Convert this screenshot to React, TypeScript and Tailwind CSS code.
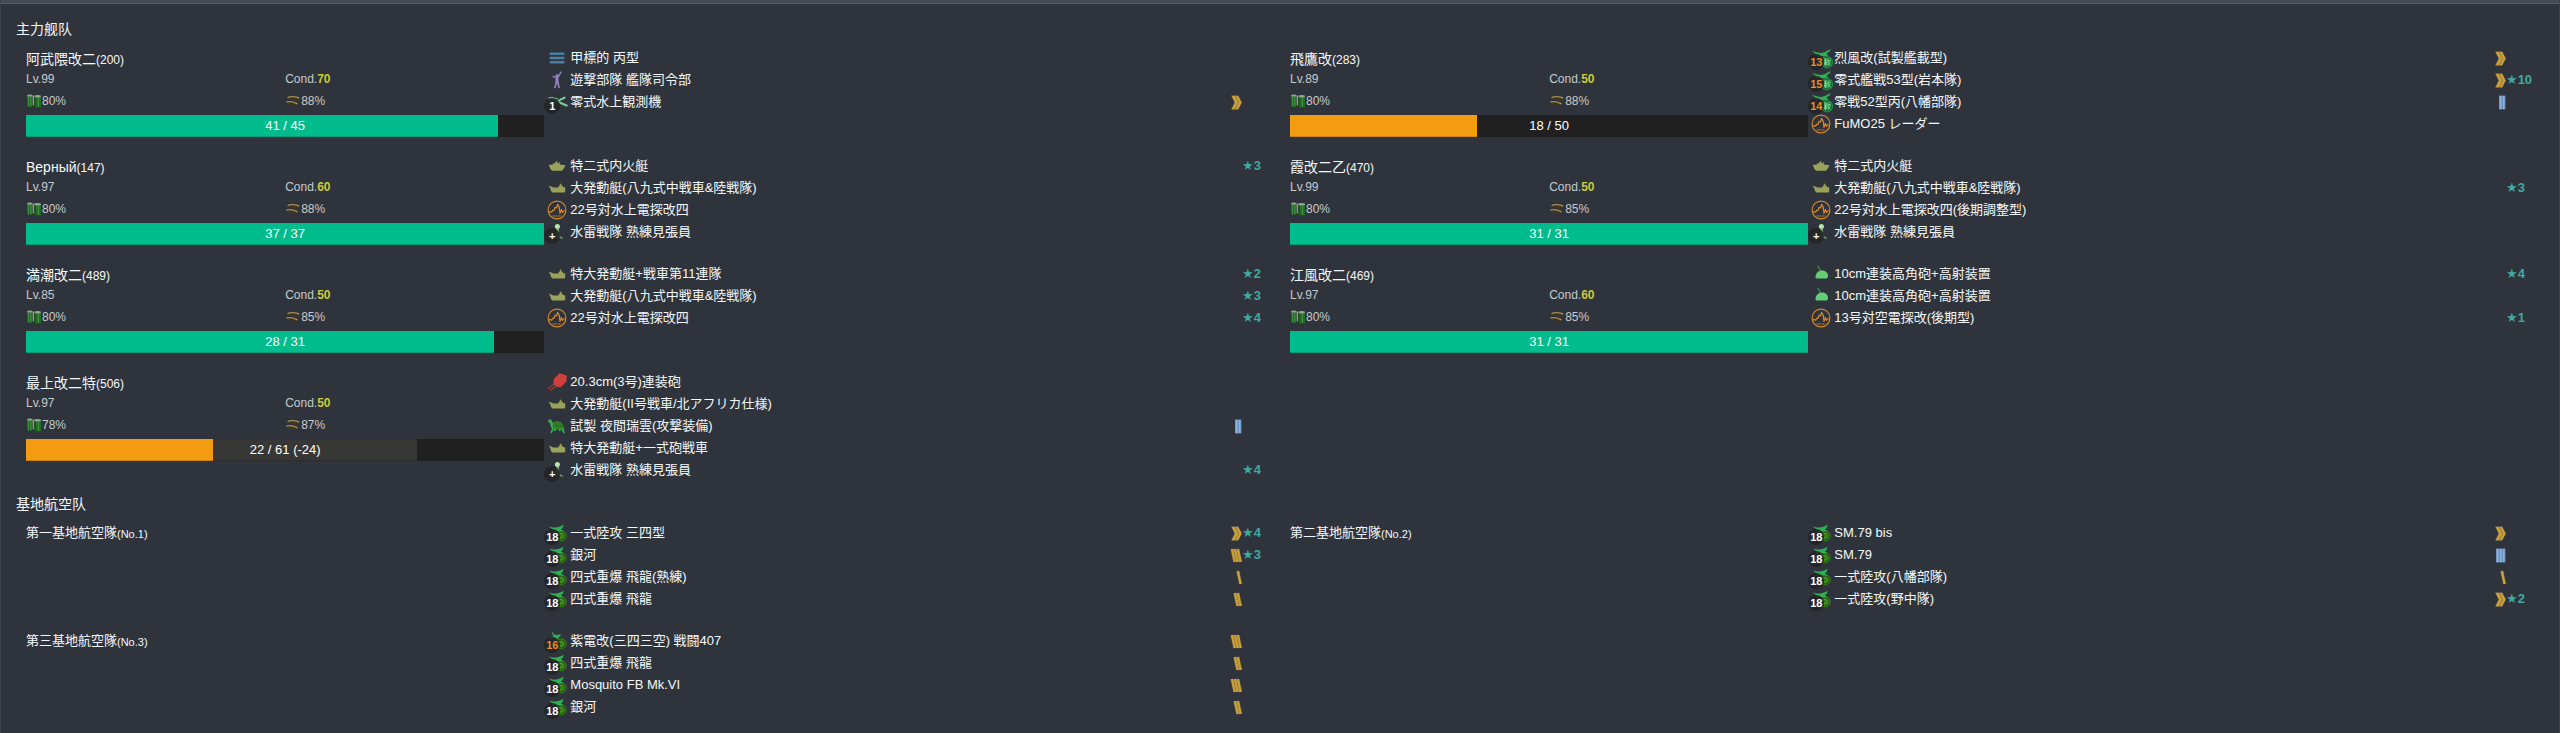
import React from 'react'

type IconKind =
  | 'sub' | 'command' | 'recon' | 'tank' | 'boat' | 'radar' | 'lookout'
  | 'gun' | 'turtle' | 'aagun' | 'fighter' | 'bomber' | 'interceptor'
type Rank = 'chevron' | 'gold1' | 'gold2' | 'gold3' | 'blue2' | 'blue3'

interface Item {
  icon: IconKind
  name: string
  count?: string
  rank?: Rank
  star?: number
}
interface Ship {
  name: string
  id: number
  lv: number
  cond: number
  fuel: number
  ammo: number
  hp: number
  max: number
  loss?: number
  items: Item[]
}
interface Base {
  name: string
  no: number
  items: Item[]
}

const ships: Ship[] = [
  {
    name: '阿武隈改二', id: 200, lv: 99, cond: 70, fuel: 80, ammo: 88, hp: 41, max: 45,
    items: [
      { icon: 'sub', name: '甲標的 丙型' },
      { icon: 'command', name: '遊撃部隊 艦隊司令部' },
      { icon: 'recon', name: '零式水上観測機', count: '1', rank: 'chevron' },
    ],
  },
  {
    name: '飛鷹改', id: 283, lv: 89, cond: 50, fuel: 80, ammo: 88, hp: 18, max: 50,
    items: [
      { icon: 'fighter', name: '烈風改(試製艦載型)', count: '13', rank: 'chevron' },
      { icon: 'fighter', name: '零式艦戦53型(岩本隊)', count: '15', rank: 'chevron', star: 10 },
      { icon: 'fighter', name: '零戦52型丙(八幡部隊)', count: '14', rank: 'blue2' },
      { icon: 'radar', name: 'FuMO25 レーダー' },
    ],
  },
  {
    name: 'Верный', id: 147, lv: 97, cond: 60, fuel: 80, ammo: 88, hp: 37, max: 37,
    items: [
      { icon: 'tank', name: '特二式内火艇', star: 3 },
      { icon: 'boat', name: '大発動艇(八九式中戦車&陸戦隊)' },
      { icon: 'radar', name: '22号対水上電探改四' },
      { icon: 'lookout', name: '水雷戦隊 熟練見張員', count: '+' },
    ],
  },
  {
    name: '霞改二乙', id: 470, lv: 99, cond: 50, fuel: 80, ammo: 85, hp: 31, max: 31,
    items: [
      { icon: 'tank', name: '特二式内火艇' },
      { icon: 'boat', name: '大発動艇(八九式中戦車&陸戦隊)', star: 3 },
      { icon: 'radar', name: '22号対水上電探改四(後期調整型)' },
      { icon: 'lookout', name: '水雷戦隊 熟練見張員', count: '+' },
    ],
  },
  {
    name: '満潮改二', id: 489, lv: 85, cond: 50, fuel: 80, ammo: 85, hp: 28, max: 31,
    items: [
      { icon: 'boat', name: '特大発動艇+戦車第11連隊', star: 2 },
      { icon: 'boat', name: '大発動艇(八九式中戦車&陸戦隊)', star: 3 },
      { icon: 'radar', name: '22号対水上電探改四', star: 4 },
    ],
  },
  {
    name: '江風改二', id: 469, lv: 97, cond: 60, fuel: 80, ammo: 85, hp: 31, max: 31,
    items: [
      { icon: 'aagun', name: '10cm連装高角砲+高射装置', star: 4 },
      { icon: 'aagun', name: '10cm連装高角砲+高射装置' },
      { icon: 'radar', name: '13号対空電探改(後期型)', star: 1 },
    ],
  },
  {
    name: '最上改二特', id: 506, lv: 97, cond: 50, fuel: 78, ammo: 87, hp: 22, max: 61, loss: 24,
    items: [
      { icon: 'gun', name: '20.3cm(3号)連装砲' },
      { icon: 'boat', name: '大発動艇(II号戦車/北アフリカ仕様)' },
      { icon: 'turtle', name: '試製 夜間瑞雲(攻撃装備)', rank: 'blue2' },
      { icon: 'boat', name: '特大発動艇+一式砲戦車' },
      { icon: 'lookout', name: '水雷戦隊 熟練見張員', count: '+', star: 4 },
    ],
  },
]

const bases: Base[] = [
  {
    name: '第一基地航空隊', no: 1,
    items: [
      { icon: 'bomber', name: '一式陸攻 三四型', count: '18', rank: 'chevron', star: 4 },
      { icon: 'bomber', name: '銀河', count: '18', rank: 'gold3', star: 3 },
      { icon: 'bomber', name: '四式重爆 飛龍(熟練)', count: '18', rank: 'gold1' },
      { icon: 'bomber', name: '四式重爆 飛龍', count: '18', rank: 'gold2' },
    ],
  },
  {
    name: '第二基地航空隊', no: 2,
    items: [
      { icon: 'bomber', name: 'SM.79 bis', count: '18', rank: 'chevron' },
      { icon: 'bomber', name: 'SM.79', count: '18', rank: 'blue3' },
      { icon: 'bomber', name: '一式陸攻(八幡部隊)', count: '18', rank: 'gold1' },
      { icon: 'bomber', name: '一式陸攻(野中隊)', count: '18', rank: 'chevron', star: 2 },
    ],
  },
  {
    name: '第三基地航空隊', no: 3,
    items: [
      { icon: 'interceptor', name: '紫電改(三四三空) 戦闘407', count: '16', rank: 'gold3' },
      { icon: 'bomber', name: '四式重爆 飛龍', count: '18', rank: 'gold2' },
      { icon: 'bomber', name: 'Mosquito FB Mk.VI', count: '18', rank: 'gold3' },
      { icon: 'bomber', name: '銀河', count: '18', rank: 'gold2' },
    ],
  },
]

const Roundel = () => (
  <>
    <circle cx="14.2" cy="12.8" r="5.6" fill="#2b5a17" />
    <circle cx="14.2" cy="12.8" r="4.9" fill="none" stroke="#2f7d15" strokeWidth="1" />
    <circle cx="14" cy="12.8" r="2.5" fill="#2f7d15" stroke="#4fa62a" strokeWidth="1" />
  </>
)

const shapes: Record<IconKind, React.ReactNode> = {
  sub: (
    <g fill="#4b7fa6">
      <rect x="2.5" y="4.4" width="15" height="2.6" rx="1" />
      <rect x="2.5" y="8.7" width="15" height="2.6" rx="1" />
      <rect x="2.5" y="13" width="15" height="2.6" rx="1" />
    </g>
  ),
  command: (
    <g stroke="#9c80c8" strokeLinecap="round" strokeLinejoin="round" fill="none">
      <circle cx="10" cy="5.6" r="1" fill="#9c80c8" />
      <path d="M14 2l-2 3.6-2 2.4L6 6.4" strokeWidth="1.4" />
      <path d="M10 8v4" strokeWidth="3" />
      <path d="M9.4 12 8 17.4M10.8 12l1.2 5.4" strokeWidth="1.6" />
    </g>
  ),
  recon: (
    <g stroke="#7ecb9a" strokeLinecap="round" fill="none">
      <path d="M2 6 10 6.6" strokeWidth="1.4" />
      <path d="M8 8.4 19.6 13.6" strokeWidth="2.2" />
      <path d="M7.6 10.6 17.6 5.6" strokeWidth="2" />
      <path d="M.6 10.4 5 8.6" strokeWidth="1.4" />
      <path d="M5 5.6 9 9" strokeWidth="1.4" />
    </g>
  ),
  tank: (
    <path d="M1.6 9 6 8.6 6.6 6.4 8 8 8.6 5.4 10.4 5.6 10.8 7.8 12.4 5.8 13 8.6 18.4 9.2 17.4 11.4 16.2 13.6 14.8 14.8H5.2L3.4 13 2.6 10.8z" fill="#9aa35b" />
  ),
  boat: (
    <path d="M1.6 7.6 6.6 9.4H11.6V7.8H12.8V5.8H14.4V7.8H15.8V9.2H18.2V13.4L17.4 14.4H5.4L4 13 3.4 10.6z" fill="#9aa35b" />
  ),
  radar: (
    <g fill="none" stroke="#d98b2b" strokeLinejoin="round" strokeLinecap="round">
      <circle cx="10" cy="10" r="8.9" strokeWidth="1.1" />
      <path d="M2.4 11.6 4.6 12.2 5.6 10.4 7 10.4 8 7.4 9.4 8 10.6 4.4 12.2 7.4 13 13.4 14.4 9.4 15.4 12.4 17.2 10.6" strokeWidth="1.2" />
      <path d="M6 16h8" strokeWidth=".8" strokeDasharray="1.4 1.2" />
    </g>
  ),
  lookout: (
    <g>
      <path d="M6.5 14 9 10l2.5-.6L13 13l-1 3.5H8z" fill="#5b8455" />
      <circle cx="10.4" cy="4.4" r="2.5" fill="#b5e6a3" />
      <path d="M9.4 6.6h2.4l.4 4.2-2.6.8z" fill="#8bc983" />
      <path d="M12 14.5l3 1.6" stroke="#6d9c66" strokeWidth="1.6" strokeLinecap="round" />
    </g>
  ),
  gun: (
    <g>
      <path d="M7.2 6.4 12.6 1.2 19.8 3.4 19.4 9.4 13.6 15.2 8.8 14.6 6.2 11z" fill="#cf3f3b" />
      <path d="M8 11.4 .8 17M9.8 13.6 3 18.4" stroke="#cf3f3b" strokeWidth="1" />
    </g>
  ),
  turtle: (
    <g>
      <path d="M5 9.6C6 6 9 4.6 11.6 5.2c2.8.6 5 3 5.2 6.4L18 13l-1 .6H6z" fill="#33802a" />
      <path d="M5.6 9.4c-.4-2.6-.8-5.2-2.6-5.4-1.4 0-1.6 2-.2 2.2l1 .2c.4 2.8.8 5 2.2 6.4" fill="none" stroke="#3fae56" strokeWidth="1.5" />
      <path d="M5.8 13 4.4 16.4M8.4 13.2l-.6 1.2M15.4 13.2l1.4 3.2M12.6 13.4l.2 1" stroke="#3fae56" strokeWidth="1.7" strokeLinecap="round" />
      <path d="M8.6 6.4l1.6 6M12.6 5.8l.4 7M6.4 9.6h10" stroke="#2b6a22" strokeWidth=".7" />
    </g>
  ),
  aagun: (
    <g>
      <path d="M7 2.4 9.6 7" stroke="#3f7f51" strokeWidth="1.5" strokeLinecap="round" />
      <path d="M4.4 13.4C4.6 9.6 7 6.4 11 6.4c3.8 0 6 2.6 6 5.2 0 1.8-.6 2.8-1.4 2.8H5.4z" fill="#63cd78" />
    </g>
  ),
  fighter: (
    <g>
      <circle cx="16" cy="14.2" r="6.2" fill="#1d6a35" />
      <circle cx="16" cy="14.2" r="5.6" fill="none" stroke="#26944a" strokeWidth=".8" />
      <path d="M13 11h3M13 13h3v2.4h-3zM14.5 11v6.8M12.8 16.8h3.6M17 10.4c0 3 .6 5.8 2.6 7.2M16.6 12.6h3.2M19.4 13.8l-2.6 3.8M18.8 10.2l.6 1" fill="none" stroke="#74dc91" strokeWidth="1" />
      <path d="M1 2.8 6.4 4.6 10 5 14 4 19.4 1 19 3 15.4 5.8 17.6 7.6 12 8.6 8 8.2 3.4 8.8 5.4 6.4z" fill="#2fb052" />
    </g>
  ),
  bomber: (
    <g>
      <Roundel />
      <path d="M1.8 3.6 6 4.4 9.5 4.6 13 3.6 16.8 1.8 15.8 4.4 14 6.4 17 8.4 11.6 8.2 8 8.4 3.4 9.6 6.2 6.8z" fill="#2fb052" />
    </g>
  ),
  interceptor: (
    <g>
      <Roundel />
      <path d="M4.6 .6 8 4 13.6 3.4 13.8 4.8 11 6.8 12 8.6 8 8 2.8 8 3.6 6.4 6.4 5.4z" fill="#2fb052" />
    </g>
  ),
}

function ItemIcon({ kind, count }: { kind: IconKind; count?: string }) {
  const orange = kind === 'fighter' || kind === 'interceptor'
  return (
    <span className="relative mx-[3px] h-5 w-5 shrink-0">
      <svg viewBox="0 0 20 20" className="h-5 w-5 overflow-visible" aria-hidden="true">
        {shapes[kind]}
      </svg>
      {count && (
        <span
          className={`absolute top-[6px] -left-[3px] flex h-4 w-4 items-center justify-center rounded-full bg-[#222427]/90 text-[11px] leading-none font-bold ${
            orange ? 'text-[#f08c1c]' : 'text-white'
          }`}
        >
          {count}
        </span>
      )}
    </span>
  )
}

function RankMark({ rank }: { rank: Rank }) {
  const gold = '#d3a02a'
  const halo = '#8f8461'
  const slant = (n: number) =>
    Array.from({ length: n }, (_, i) => {
      const x = 8.6 - i * 2.9
      return (
        <g key={i}>
          <path d={`M${x - 1.8} 1 L${x + 1} 14`} stroke={halo} strokeWidth="3" />
          <path d={`M${x - 1.8} 1 L${x + 1} 14`} stroke={gold} strokeWidth="1.9" />
        </g>
      )
    })
  const upright = (n: number) =>
    Array.from({ length: n }, (_, i) => (
      <g key={i}>
        <rect x={7 - i * 3} y=".5" width="3.4" height="14" fill="#6286b0" />
        <rect x={7.6 - i * 3} y="1" width="2" height="13" fill="#8db3e0" />
      </g>
    ))
  return (
    <svg viewBox="0 0 11 15" className="h-[15px] w-[11px] shrink-0 overflow-visible" aria-hidden="true">
      {rank === 'chevron' && (
        <g>
          <path d="M.2.6H7.2L11 7.5 7.2 14.6H.2L3.6 7.5z" fill={halo} />
          <path d="M.8 1H3.6L6.8 7.5 3.6 14.2H.8L4.2 7.5zM5 1H7L10.4 7.5 7 14.2H5L8.2 7.5z" fill={gold} />
        </g>
      )}
      {rank === 'gold1' && slant(1)}
      {rank === 'gold2' && slant(2)}
      {rank === 'gold3' && slant(3)}
      {rank === 'blue2' && upright(2)}
      {rank === 'blue3' && upright(3)}
    </svg>
  )
}

function ItemList({ items }: { items: Item[] }) {
  return (
    <ul className="col-span-7">
      {items.map((item, i) => (
        <li key={i} className="flex h-[22px] items-center text-[13px]">
          <ItemIcon kind={item.icon} count={item.count} />
          <span className="min-w-0 flex-1 truncate text-[#f5f8fa]">{item.name}</span>
          {item.rank && <RankMark rank={item.rank} />}
          <span className="flex w-7 shrink-0 items-center text-[#3fa9a2]">
            {item.star && (
              <>
                <span className="font-['DejaVu_Sans',sans-serif]">★</span>
                <span className="font-bold">{item.star}</span>
              </>
            )}
          </span>
        </li>
      ))}
    </ul>
  )
}

function FuelIcon() {
  return (
    <svg viewBox="0 0 16 14" className="h-[14px] w-4" aria-hidden="true">
      <path d="M1 1.6h5.6v11H1.6z" fill="#276b28" />
      <path d="M8 2.2h7v11H8.6z" fill="#276b28" />
      <path d="M2.4 2.4v10M12.4 3v10M4.8 2.4v10" stroke="#3f963e" strokeWidth="1" />
      <path d="M6.6 2v10.8M9 3v10" stroke="#1d421f" strokeWidth="1" />
      <ellipse cx="3.8" cy="1.6" rx="2.8" ry="1.1" fill="#97a297" />
      <ellipse cx="11.6" cy="2.2" rx="3.4" ry="1.2" fill="#97a297" />
      <path d="M6.4 1.4h1.6v10H6.8z" fill="#8c9c8c" />
    </svg>
  )
}

function AmmoIcon() {
  return (
    <svg viewBox="0 0 16 14" className="h-[14px] w-4" aria-hidden="true">
      <path d="M2 3.4C5 1.4 9 1.8 14.6 3L13.8 7.4C9 6.4 6 5.6 2 4.6z" fill="#3f3522" />
      <path d="M2.6 3.6C6 2 9.6 2.4 14.2 4" stroke="#a08c5e" strokeWidth="1.4" fill="none" />
      <path d="M1 8.4C4 6.4 8 7.2 13.4 9L12.2 13C8 11.6 5 10.4 1 9.4z" fill="#3f3522" />
      <path d="M1.4 8.2C5 6.8 8.4 7.8 12.6 9.8" stroke="#a08c5e" strokeWidth="1.4" fill="none" />
    </svg>
  )
}

function HpBar({ hp, max, loss }: { hp: number; max: number; loss?: number }) {
  const ratio = hp / max
  return (
    <div
      role="progressbar"
      aria-label="HP"
      aria-valuenow={hp}
      aria-valuemin={0}
      aria-valuemax={max}
      className="relative mt-px flex h-[22px] bg-[#202020]"
    >
      <div
        className={`border-b border-black/15 ${ratio > 0.5 ? 'bg-[#00bc8c]' : 'bg-[#f39c12]'}`}
        style={{ width: `${ratio * 100}%` }}
      />
      {loss && (
        <div className="border-b border-black/15 bg-[#373735]" style={{ width: `${(loss / max) * 100}%` }} />
      )}
      <span className="absolute inset-0 flex items-center justify-center text-[13px] text-white">
        {hp} / {max}
        {loss ? ` (-${loss})` : ''}
      </span>
    </div>
  )
}

function ShipCard({ ship }: { ship: Ship }) {
  return (
    <article className="grid min-h-[97px] grid-cols-12 px-[10px]">
      <div className="col-span-5">
        <h3 className="flex h-[23px] items-center text-sm text-[#f5f8fa]">
          <span>{ship.name}</span>
          <small className="pt-[2px] text-xs">({ship.id})</small>
        </h3>
        <div className="grid grid-cols-2 text-xs text-[#c6cacd]">
          <span className="flex h-[18px] items-center">Lv.{ship.lv}</span>
          <span className="flex h-[18px] items-center">
            Cond.<span className="font-bold text-[#c9c93a]">{ship.cond}</span>
          </span>
          <span className="flex h-[26px] items-center">
            <FuelIcon />
            {ship.fuel}%
          </span>
          <span className="flex h-[26px] items-center">
            <AmmoIcon />
            {ship.ammo}%
          </span>
        </div>
        <HpBar hp={ship.hp} max={ship.max} loss={ship.loss} />
      </div>
      <ItemList items={ship.items} />
    </article>
  )
}

function BaseCard({ base }: { base: Base }) {
  return (
    <article className="grid min-h-[97px] grid-cols-12 px-[10px]">
      <h3 className="col-span-5 flex h-[22px] items-center text-[13px] text-[#f5f8fa]">
        <span>{base.name}</span>
        <small className="pt-[2px] text-[11px]">(No.{base.no})</small>
      </h3>
      <ItemList items={base.items} />
    </article>
  )
}

function Section({ title, children }: { title: string; children: React.ReactNode }) {
  return (
    <section>
      <h2 className="mb-[7px] flex h-[22px] items-center text-sm text-[#f5f8fa]">{title}</h2>
      <div className="grid grid-cols-2 gap-y-[11px]">{children}</div>
    </section>
  )
}

export default function App() {
  return (
    <div className="min-h-screen border-x border-[#3e434b] bg-[#2f343c] font-['Liberation_Sans','Noto_Sans_CJK_JP','Noto_Sans_CJK_SC',sans-serif]">
      <div className="h-1 border-b border-[#565a62] bg-[#454951]" />
      <main className="flex flex-col gap-3 px-[15px] pt-[14px] pb-3">
        <Section title="主力舰队">
          {ships.map((ship) => (
            <ShipCard key={ship.id} ship={ship} />
          ))}
        </Section>
        <Section title="基地航空队">
          {bases.map((base) => (
            <BaseCard key={base.no} base={base} />
          ))}
        </Section>
      </main>
    </div>
  )
}
